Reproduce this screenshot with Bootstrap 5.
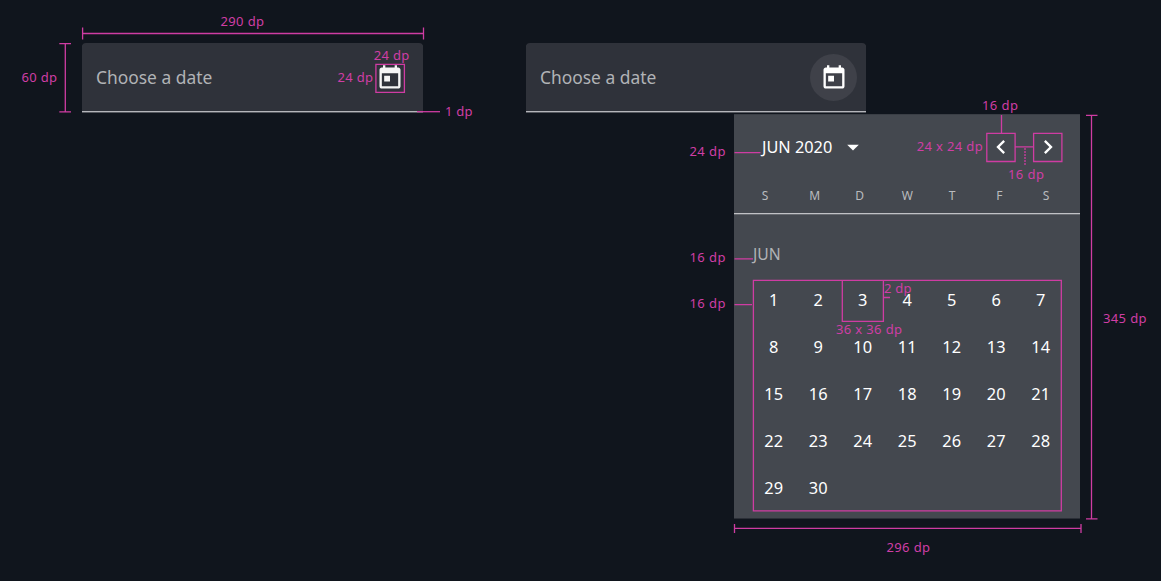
<!DOCTYPE html>
<html lang="en">
<head>
<meta charset="utf-8">
<meta name="viewport" content="width=device-width, initial-scale=1">
<title>Date picker specs</title>
<link href="https://cdn.jsdelivr.net/npm/bootstrap@5.3.0/dist/css/bootstrap.min.css" rel="stylesheet">
<style>
body{background:#10151d;color:#fff;font-family:"Noto Sans",sans-serif;height:581px;overflow:hidden}
.board{padding:43px 0 0 82px;gap:103px}
.date-field{width:341px;height:69px;background:#2f323a;border-bottom:1px solid #b5b6bb;border-radius:4px 4px 0 0;box-shadow:0 1px 0 #55585f;padding:1px 10px 0 14px;font-size:17.4px;color:#b1b3b6}
.picker-col{width:554px}
.picker-col .date-field{width:340px;padding-right:9px}
.cal-btn{width:47px;height:47px;border-radius:50%;color:#f5f5f5}
.cal-btn.active-btn{background:#3f4149;color:#fff}
.ico{width:28px;height:28px;fill:currentColor;display:block;flex:none}
.panel{display:flow-root;width:346.5px;height:404px;margin-top:2px;background:#44484f;box-shadow:inset 0 1px 0 #3a3e45,0 1px 0 #2b2f37}
.panel-top{height:28px;margin:19px 18.5px 0 28.5px}
.month-name{font-size:16.3px;line-height:28px}
.nav-gap{gap:19px}
.month-gap{gap:7px}
.weekdays{display:grid;grid-template-columns:47.500px 46px 46.500px 47px 47.500px 46.500px 12px;margin-top:22px;padding-left:28.3px;height:31px;line-height:26px;font-size:12px;color:#b9bbbe;border-bottom:1px solid #c0c1c5;box-shadow:0 1px 0 #686b71}
.section-name{margin:28px 0 0 19.5px;font-size:15.7px;line-height:24px;color:#b1b3b6}
.days{display:grid;grid-template-columns:repeat(7,44.5px);grid-auto-rows:46.8px;margin:11.1px 0 0 18px;font-size:16.4px;place-items:center;line-height:24px}
.specs text{font-size:13px;fill:#cf3ea5}
.specs path{fill:none;stroke:#cf3ca3;stroke-width:1.3}
</style>
</head>
<body>
<main class="board d-flex align-items-start">
  <div class="date-field d-flex align-items-center justify-content-between flex-shrink-0">
    <span>Choose a date</span>
    <span class="cal-btn d-flex align-items-center justify-content-center"><svg class="ico" viewBox="0 0 24 24"><path d="M19 3h-1V1h-2v2H8V1H6v2H5c-1.110 0-1.990.9-1.990 2L3 19c0 1.100.89 2 2 2h14c1.100 0 2-.9 2-2V5c0-1.100-.9-2-2-2zm0 16H5V8h14v11zM7 10h5v5H7z"/></svg></span>
  </div>
  <div class="picker-col d-flex flex-column flex-shrink-0">
    <div class="date-field d-flex align-items-center justify-content-between">
      <span>Choose a date</span>
      <span class="cal-btn active-btn d-flex align-items-center justify-content-center"><svg class="ico" viewBox="0 0 24 24"><path d="M19 3h-1V1h-2v2H8V1H6v2H5c-1.110 0-1.990.9-1.990 2L3 19c0 1.100.89 2 2 2h14c1.100 0 2-.9 2-2V5c0-1.100-.9-2-2-2zm0 16H5V8h14v11zM7 10h5v5H7z"/></svg></span>
    </div>
    <section class="panel align-self-end">
      <div class="panel-top d-flex align-items-center justify-content-between">
        <div class="d-flex align-items-center month-gap"><span class="month-name">JUN 2020</span><svg class="ico" viewBox="0 0 24 24"><path d="M7 10l5 5 5-5z"/></svg></div>
        <div class="d-flex nav-gap"><svg class="ico" viewBox="0 0 24 24"><path d="M15.410 7.410L14 6l-6 6 6 6 1.410-1.410L10.830 12z"/></svg><svg class="ico" viewBox="0 0 24 24"><path d="M10 6L8.590 7.410 13.170 12l-4.580 4.590L10 18l6-6z"/></svg></div>
      </div>
      <div class="weekdays"><span>S</span><span>M</span><span>D</span><span>W</span><span>T</span><span>F</span><span>S</span></div>
      <div class="section-name">JUN</div>
      <div class="days">
        <span>1</span><span>2</span><span>3</span><span>4</span><span>5</span><span>6</span><span>7</span>
        <span>8</span><span>9</span><span>10</span><span>11</span><span>12</span><span>13</span><span>14</span>
        <span>15</span><span>16</span><span>17</span><span>18</span><span>19</span><span>20</span><span>21</span>
        <span>22</span><span>23</span><span>24</span><span>25</span><span>26</span><span>27</span><span>28</span>
        <span>29</span><span>30</span>
      </div>
    </section>
  </div>
</main>
<!-- Dimension lines and labels over the components -->
<svg class="specs position-absolute top-0 start-0" width="1161" height="581" viewBox="0 0 1161 581">
  <path d="M82.600 33.500H423.500M82.600 27.500V39.500M423.500 27.500V39.500"/>
  <path d="M65.300 43.700V111.800M59.300 43.700H71M59.300 111.800H71"/>
  <path d="M417 111.700H440"/>
  <path d="M375.900 64.400H404.400V92.300H375.900Z"/>
  <path d="M734.500 152.600H760.500M734.500 258.900H753M734.500 304.600H752"/>
  <path d="M753.400 280.300H1061.300V510.900H753.400Z"/>
  <path d="M842.300 280.300V321.300H883.400V280.300M883.400 297.500H890"/>
  <path d="M986.800 133.400H1015.100V161.500H986.800ZM1033.600 133.400H1061.900V161.500H1033.600Z"/>
  <path d="M1001.500 115V133M1015 146.900H1033.500"/>
  <path d="M1025 148V166" stroke-dasharray="2 1"/>
  <path d="M1091.500 115.300V518.900M1086 115.300H1097.500M1086 518.900H1097.500"/>
  <path d="M734.500 528.400H1081M734.500 524V533M1081 524V533"/>
  <text x="220.500" y="26" textLength="43.500">290 dp</text>
  <text x="21.500" y="82" textLength="35.500">60 dp</text>
  <text x="373.800" y="60" textLength="35.500">24 dp</text>
  <text x="337.500" y="82" textLength="35.500">24 dp</text>
  <text x="445" y="116" textLength="27.500">1 dp</text>
  <text x="689.500" y="156" textLength="36">24 dp</text>
  <text x="689.500" y="262" textLength="36">16 dp</text>
  <text x="689.500" y="308" textLength="36">16 dp</text>
  <text x="982" y="110" textLength="36">16 dp</text>
  <text x="916.700" y="151" textLength="66">24 x 24 dp</text>
  <text x="1008" y="179" textLength="36">16 dp</text>
  <text x="884" y="293" textLength="27.500">2 dp</text>
  <text x="836" y="334" textLength="66">36 x 36 dp</text>
  <text x="1103" y="323" textLength="43.500">345 dp</text>
  <text x="886.500" y="552" textLength="43.500">296 dp</text>
</svg>
<script src="https://cdn.jsdelivr.net/npm/bootstrap@5.3.0/dist/js/bootstrap.bundle.min.js"></script>
</body>
</html>
